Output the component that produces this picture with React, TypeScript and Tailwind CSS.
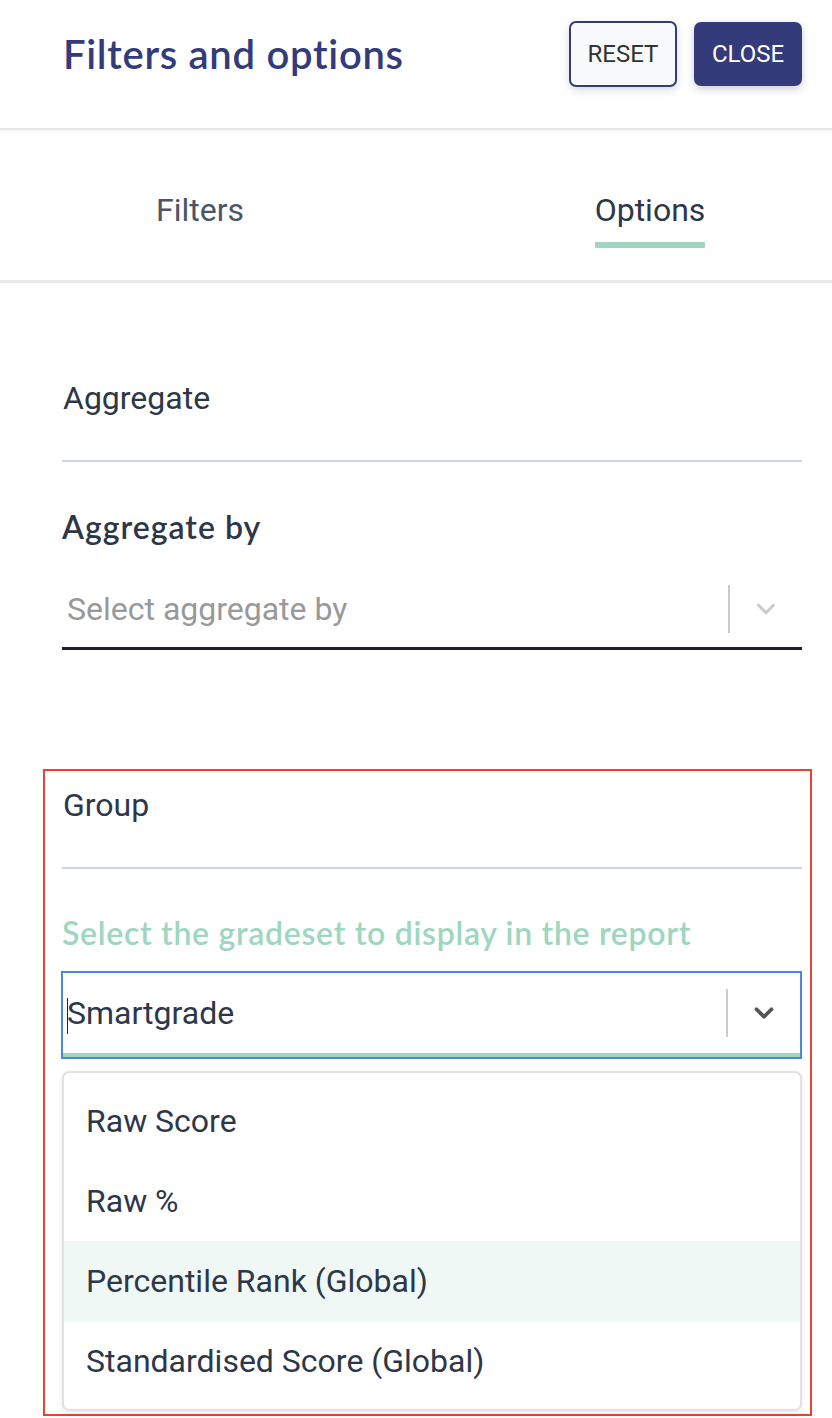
import { ChevronDown } from 'lucide-react';

const OPTIONS = [
  'Raw Score',
  'Raw %',
  'Percentile Rank (Global)',
  'Standardised Score (Global)',
];

const sans = "font-['Roboto','Liberation_Sans',sans-serif]";
const muli = "font-['Lato','Noto_Sans',sans-serif]";

export default function App() {
  return (
    <div className="w-[832px] min-h-[1418px] bg-white text-[#2d3748]">
      {/* Header */}
      <div className="h-[130px] pl-[63px] pr-[30px] pt-[21px] border-b-2 border-[#e6e6e6] shadow-[0_1px_3px_rgba(0,0,0,0.05)]">
        <div className="h-[66px] flex items-center justify-between">
          <h1 className={`${muli} text-[40px] leading-[48px] font-semibold text-[#343b7a] tracking-[0.7px]`}>
            Filters and options
          </h1>
          <div className="flex items-center gap-[17px]">
            <button className={`${sans} w-[108px] h-[66px] rounded-[7px] border-2 border-[#343b7a] bg-[#f8f9fb] text-[24px] text-[#333] shadow-[0_3px_8px_rgba(0,0,0,0.15)]`}>
              RESET
            </button>
            <button className={`${sans} w-[108px] h-[64px] rounded-[7px] bg-[#343b7a] text-[24px] text-white shadow-[0_3px_8px_rgba(0,0,0,0.2)]`}>
              CLOSE
            </button>
          </div>
        </div>
      </div>

      {/* Tabs */}
      <div className="h-[153px] flex border-b-[3px] border-[#e8e8e8]">
        <div className="w-[400px] flex justify-center pt-[58px]">
          <span className={`${sans} text-[32px] text-[#4a5568] leading-[44px]`}>Filters</span>
        </div>
        <div className="flex-1 flex justify-center pl-[68px] pt-[58px]">
          <div className="flex flex-col">
            <span className={`${sans} text-[32px] text-[#2d3748] leading-[44px]`}>Options</span>
            <div className="mt-[10px] h-[6px] bg-[#9ed6bf]" />
          </div>
        </div>
      </div>

      <div className="pl-[62px] pr-[30px]">
        {/* Aggregate */}
        <div className="pt-[95px]">
          <div className={`${sans} text-[32px] leading-[40px] pl-px`}>Aggregate</div>
          <div className="mt-[42px] h-[2px] bg-[#cbd5e0]" />
          <div className={`${muli} mt-[45px] text-[32px] font-semibold tracking-[1px] leading-[40px]`}>Aggregate by</div>
          <div className="mt-[23px] h-[80px] flex items-center border-b-[3px] border-[#1f2228]">
            <span className={`${sans} flex-1 pl-[5px] text-[32px] text-[#999]`}>Select aggregate by</span>
            <div className="w-[2px] h-[48px] bg-[#ccc]" />
            <div className="w-[72px] flex justify-center">
              <ChevronDown className="w-[30px] h-[30px] text-[#ccc]" strokeWidth={2.5} />
            </div>
          </div>
        </div>

        {/* Group */}
        <div className="mt-[119px] -ml-[19px] -mr-[10px] border-2 border-[#e8432d] pl-[16px] pr-[8px] pb-[3px]">
          <div className={`${sans} pt-[14px] text-[32px] leading-[40px] pl-[2px]`}>Group</div>
          <div className="mt-[42px] ml-px h-[2px] bg-[#cbd5e0]" />
          <div className={`${muli} mt-[44px] text-[32px] font-semibold tracking-[0.7px] text-[#9ed6bf] leading-[40px] pl-px`}>
            Select the gradeset to display in the report
          </div>
          <div className="mt-[18px] h-[88px] border-2 border-[#4a86e8] flex flex-col">
            <div className="flex-1 flex items-center">
              <span className={`${sans} flex-1 pl-[4px] text-[32px] text-[#2d3748]`}>
                <span className="inline-block w-px h-[36px] bg-[#222] align-middle -mr-px" />
                Smartgrade
              </span>
              <div className="w-[2px] h-[48px] bg-[#ccc]" />
              <div className="w-[72px] flex justify-center">
                <ChevronDown className="w-[30px] h-[30px] text-[#555]" strokeWidth={3} />
              </div>
            </div>
            <div className="h-[4px] bg-[#9ed6bf]" />
          </div>
          <div className="mt-[12px] ml-px rounded-[7px] border-2 border-[#e2e2e2] bg-white py-[8px] shadow-[0_2px_6px_rgba(0,0,0,0.08)]">
            {OPTIONS.map((opt, i) => (
              <div
                key={opt}
                className={`${sans} h-[80px] flex items-center pl-[22px] text-[32px] text-[#2d3748] ${i === 2 ? 'bg-[#eff8f4]' : ''}`}
              >
                {opt}
              </div>
            ))}
          </div>
        </div>
      </div>
    </div>
  );
}
